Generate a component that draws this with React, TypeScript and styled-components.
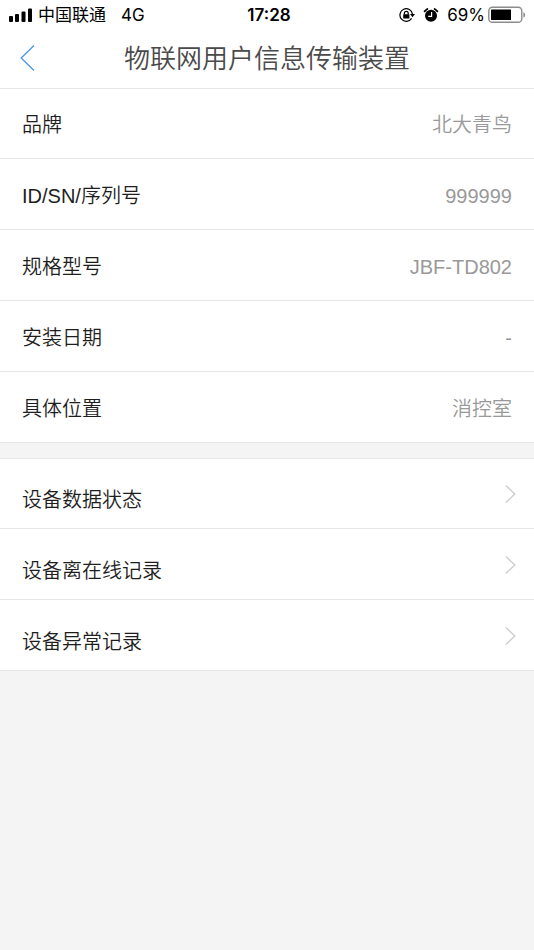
import React from "react";
import styled, { createGlobalStyle } from "styled-components";

const GlobalStyle = createGlobalStyle`
  *, *::before, *::after { box-sizing: border-box; }
  body {
    margin: 0;
    background: #f4f4f4;
    color: #1e1e1e;
    font-family: "Liberation Sans", "Noto Sans CJK SC", sans-serif;
    font-size: 20px;
    font-weight: 350;
    line-height: 30px;
  }
`;

const TopArea = styled.div`
  background: #fff;
  border-bottom: 1px solid #e6e6e6;
`;

const StatusBar = styled.div`
  display: grid;
  grid-template-columns: 1fr auto 1fr;
  align-items: center;
  height: 30px;
  padding: 0 8px;
  color: #000;
  font-family: Inter, "Noto Sans CJK SC", sans-serif;
  font-size: 17px;
  font-weight: 400;
  line-height: 30px;
`;

const StatusGroup = styled.div<{ $end?: boolean }>`
  display: flex;
  align-items: center;
  justify-content: ${(p) => (p.$end ? "flex-end" : "flex-start")};
  white-space: nowrap;
`;

const Carrier = styled.span`
  margin: 0 15px 0 5px;
`;

const Clock = styled.time`
  padding-left: 4px;
  font-weight: 600;
`;

const Percent = styled.span`
  margin: 0 3px 0 8px;
`;

const AlarmIcon = styled.svg`
  margin-left: 8px;
`;

const NavBar = styled.header`
  display: grid;
  grid-template-columns: 44px 1fr 44px;
  align-items: center;
  height: 58px;
  padding: 0 8px;
`;

const BackButton = styled.button`
  display: flex;
  align-items: center;
  height: 44px;
  padding: 0 0 2px 12px;
  border: 0;
  background: none;
  cursor: pointer;
`;

const Title = styled.h1`
  margin: 0;
  color: #4a4a4a;
  font-size: 26px;
  font-weight: 350;
  line-height: 38px;
  text-align: center;
  white-space: nowrap;
`;

const DetailList = styled.dl`
  margin: 0;
  background: #fff;
`;

const DetailRow = styled.div`
  display: flex;
  align-items: center;
  justify-content: space-between;
  min-height: 71px;
  padding: 4px 22px 0;
  border-bottom: 1px solid #e6e6e6;

  &:first-child {
    min-height: 70px;
    padding-top: 2px;
  }
`;

const Label = styled.dt``;

const Value = styled.dd`
  margin: 0;
  color: #999;
`;

const LinkList = styled.ul`
  margin: 15px 0 0;
  padding: 0;
  border-top: 1px solid #e6e6e6;
  background: #fff;
  list-style: none;
`;

const LinkItem = styled.li`
  display: flex;
  min-height: 71px;
  border-bottom: 1px solid #e6e6e6;

  &:first-child { min-height: 70px; }
`;

const RowLink = styled.a`
  display: flex;
  flex: 1;
  align-items: flex-end;
  justify-content: space-between;
  padding: 0 18px 13px 22px;
  color: inherit;
  text-decoration: none;
`;

const Chevron = styled.svg`
  margin-bottom: 12px;
`;

const details = [
  { label: "品牌", value: "北大青鸟" },
  { label: "ID/SN/序列号", value: "999999" },
  { label: "规格型号", value: "JBF-TD802" },
  { label: "安装日期", value: "-" },
  { label: "具体位置", value: "消控室" },
];

const links = [
  { label: "设备数据状态", href: "#status" },
  { label: "设备离在线记录", href: "#online" },
  { label: "设备异常记录", href: "#faults" },
];

export default function App() {
  return (
    <>
      <GlobalStyle />
      <TopArea>
        <StatusBar>
          <StatusGroup>
            <svg width="25" height="15" viewBox="0 0 25 15" aria-hidden="true">
              <rect x="1" y="8" width="4" height="6" rx="1" />
              <rect x="7" y="6" width="4" height="8" rx="1" />
              <rect x="13.5" y="3.5" width="4" height="10.5" rx="1" />
              <rect x="20" y="0.5" width="4" height="13.5" rx="1" />
            </svg>
            <Carrier>中国联通</Carrier>
            <span>4G</span>
          </StatusGroup>
          <Clock>17:28</Clock>
          <StatusGroup $end>
            <svg width="16" height="16" viewBox="0 0 16 16" aria-hidden="true">
              <path
                d="M12.6 11.4A6.3 6.3 0 1 1 13.5 7.2"
                fill="none"
                stroke="#000"
                strokeWidth="1.2"
              />
              <path d="M11 7h5l-2.5 3.2z" />
              <rect x="4.2" y="7.2" width="6.2" height="4.4" rx="0.6" />
              <path d="M5.4 7.6V6.2a1.9 1.9 0 0 1 3.8 0v1.4" fill="none" stroke="#000" strokeWidth="1.2" />
            </svg>
            <AlarmIcon width="16" height="16" viewBox="0 0 16 16" aria-hidden="true">
              <circle cx="8" cy="8.8" r="6" />
              <path
                d="M1.6 4.4A8 8 0 0 1 4.4 2M11.6 2a8 8 0 0 1 2.8 2.4"
                fill="none"
                stroke="#000"
                strokeWidth="1.8"
                strokeLinecap="round"
              />
              <path d="M8.6 5v4.4H5.2" fill="none" stroke="#fff" strokeWidth="1.2" />
            </AlarmIcon>
            <Percent>69%</Percent>
            <svg width="38" height="18" viewBox="0 0 38 18" aria-hidden="true">
              <rect x="0.8" y="1.3" width="33" height="15" rx="3.6" fill="#fff" stroke="#8c8c8c" strokeWidth="1.4" />
              <rect x="3" y="3.5" width="20" height="10.5" rx="0.6" />
              <path d="M35.4 6.2c2.4 1 2.4 4.4 0 5.4z" fill="#8c8c8c" />
            </svg>
          </StatusGroup>
        </StatusBar>
        <NavBar>
          <BackButton type="button" aria-label="返回">
            <svg width="15" height="26" viewBox="0 0 15 26" fill="none" stroke="#4795f0" strokeWidth="1.3">
              <path d="M14 .5 1.2 13 14 25.5" />
            </svg>
          </BackButton>
          <Title>物联网用户信息传输装置</Title>
        </NavBar>
      </TopArea>
      <main>
        <DetailList>
          {details.map((d) => (
            <DetailRow key={d.label}>
              <Label>{d.label}</Label>
              <Value>{d.value}</Value>
            </DetailRow>
          ))}
        </DetailList>
        <LinkList>
          {links.map((l) => (
            <LinkItem key={l.href}>
              <RowLink href={l.href}>
                {l.label}
                <Chevron
                  width="11"
                  height="18"
                  viewBox="0 0 11 18"
                  fill="none"
                  stroke="#cfcfcf"
                  strokeWidth="1.4"
                  aria-hidden="true"
                >
                  <path d="m.8.5 9 8.5-9 8.5" />
                </Chevron>
              </RowLink>
            </LinkItem>
          ))}
        </LinkList>
      </main>
    </>
  );
}
